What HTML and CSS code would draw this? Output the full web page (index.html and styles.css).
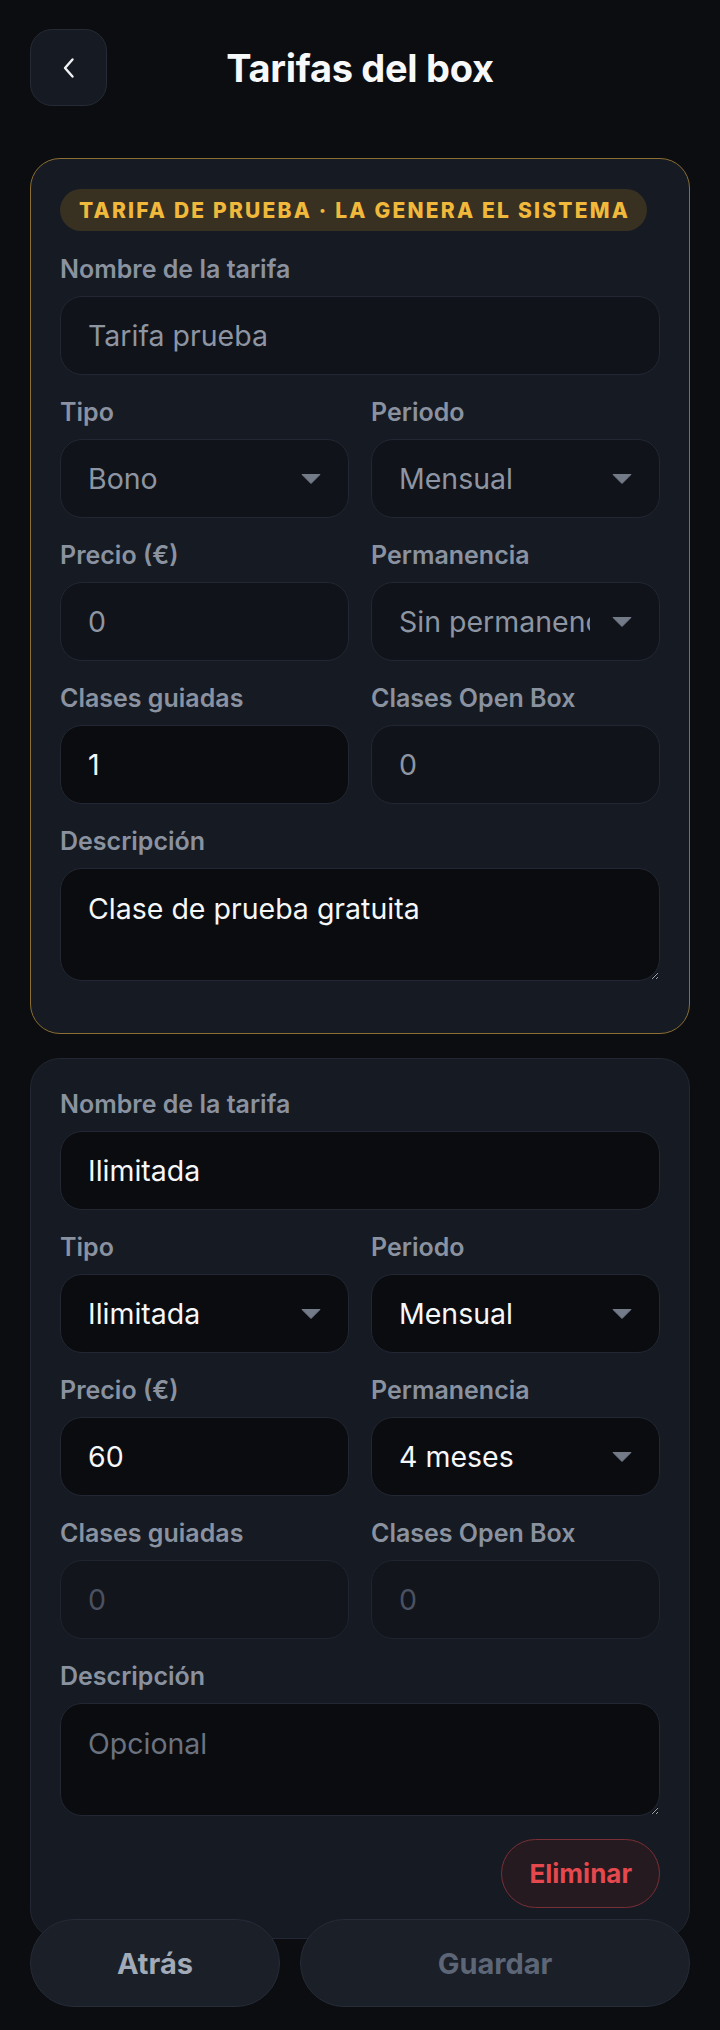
FILE: index.html
```html
<!DOCTYPE html>
<html lang="es">
<head>
<meta charset="utf-8">
<title>Tarifas del box</title>
<link rel="stylesheet" href="styles.css">
</head>
<body>
<div class="page">
  <header class="header">
    <button class="back-btn" aria-label="Volver">
      <svg width="14" height="24" viewBox="0 0 14 24"><path d="M10.5 3.5 L3 12 L10.5 20.5" fill="none" stroke="#f2f3f5" stroke-width="2.4" stroke-linecap="round" stroke-linejoin="round"/></svg>
    </button>
    <h1 class="title">Tarifas del box</h1>
    <span class="header-spacer"></span>
  </header>

  <section class="card card--trial">
    <div class="badge">TARIFA DE PRUEBA · LA GENERA EL SISTEMA</div>
    <div class="field">
      <label class="label">Nombre de la tarifa</label>
      <div class="box box--muted">Tarifa prueba</div>
    </div>
    <div class="grid">
      <div class="field">
        <label class="label">Tipo</label>
        <div class="box box--muted select"><span class="select-value">Bono</span><svg class="arrow" width="20" height="10" viewBox="0 0 20 10"><path d="M1 0.5 H19 L10 9.5 Z" fill="currentColor" stroke="currentColor" stroke-width="1" stroke-linejoin="round"/></svg></div>
      </div>
      <div class="field">
        <label class="label">Periodo</label>
        <div class="box box--muted select"><span class="select-value">Mensual</span><svg class="arrow" width="20" height="10" viewBox="0 0 20 10"><path d="M1 0.5 H19 L10 9.5 Z" fill="currentColor" stroke="currentColor" stroke-width="1" stroke-linejoin="round"/></svg></div>
      </div>
      <div class="field">
        <label class="label">Precio (€)</label>
        <div class="box box--muted">0</div>
      </div>
      <div class="field">
        <label class="label">Permanencia</label>
        <div class="box box--muted select"><span class="select-value">Sin permanencia</span><svg class="arrow" width="20" height="10" viewBox="0 0 20 10"><path d="M1 0.5 H19 L10 9.5 Z" fill="currentColor" stroke="currentColor" stroke-width="1" stroke-linejoin="round"/></svg></div>
      </div>
      <div class="field">
        <label class="label">Clases guiadas</label>
        <div class="box box--filled">1</div>
      </div>
      <div class="field">
        <label class="label">Clases Open Box</label>
        <div class="box box--muted">0</div>
      </div>
    </div>
    <div class="field">
      <label class="label">Descripción</label>
      <textarea class="textarea textarea--filled">Clase de prueba gratuita</textarea>
    </div>
  </section>

  <section class="card">
    <div class="field">
      <label class="label">Nombre de la tarifa</label>
      <div class="box box--filled">Ilimitada</div>
    </div>
    <div class="grid">
      <div class="field">
        <label class="label">Tipo</label>
        <div class="box box--filled select"><span class="select-value">Ilimitada</span><svg class="arrow" width="20" height="10" viewBox="0 0 20 10"><path d="M1 0.5 H19 L10 9.5 Z" fill="currentColor" stroke="currentColor" stroke-width="1" stroke-linejoin="round"/></svg></div>
      </div>
      <div class="field">
        <label class="label">Periodo</label>
        <div class="box box--filled select"><span class="select-value">Mensual</span><svg class="arrow" width="20" height="10" viewBox="0 0 20 10"><path d="M1 0.5 H19 L10 9.5 Z" fill="currentColor" stroke="currentColor" stroke-width="1" stroke-linejoin="round"/></svg></div>
      </div>
      <div class="field">
        <label class="label">Precio (€)</label>
        <div class="box box--filled">60</div>
      </div>
      <div class="field">
        <label class="label">Permanencia</label>
        <div class="box box--filled select"><span class="select-value">4 meses</span><svg class="arrow" width="20" height="10" viewBox="0 0 20 10"><path d="M1 0.5 H19 L10 9.5 Z" fill="currentColor" stroke="currentColor" stroke-width="1" stroke-linejoin="round"/></svg></div>
      </div>
      <div class="field">
        <label class="label">Clases guiadas</label>
        <div class="box box--disabled">0</div>
      </div>
      <div class="field">
        <label class="label">Clases Open Box</label>
        <div class="box box--disabled">0</div>
      </div>
    </div>
    <div class="field">
      <label class="label">Descripción</label>
      <textarea class="textarea textarea--filled" placeholder="Opcional"></textarea>
    </div>
    <div class="card-actions">
      <button class="btn-delete">Eliminar</button>
    </div>
  </section>
</div>

<footer class="footer">
  <button class="footer-btn footer-btn--back">Atrás</button>
  <button class="footer-btn footer-btn--save">Guardar</button>
</footer>
</body>
</html>
```

FILE: styles.css
```css
* {
  box-sizing: border-box;
}

html, body {
  margin: 0;
  padding: 0;
  background: #0b0d11;
}

body {
  font-family: "Inter", "Liberation Sans", sans-serif;
  color: #f4f5f7;
}

.page {
  padding: 29px 30px 0;
}

.header {
  display: grid;
  grid-template-columns: 77px 1fr 77px;
  align-items: center;
  margin-bottom: 52px;
}

.back-btn {
  width: 77px;
  height: 77px;
  border-radius: 22px;
  background: #161a22;
  border: 1.5px solid #252a35;
  display: flex;
  align-items: center;
  justify-content: center;
  padding: 0;
}

.title {
  margin: 0;
  text-align: center;
  font-size: 38px;
  font-weight: 700;
  letter-spacing: -0.3px;
  color: #f7f8fa;
}

.card {
  background: #161a22;
  border: 1.5px solid #222733;
  border-radius: 30px;
  padding: 30px 29px 30px;
  display: flex;
  flex-direction: column;
  gap: 22px;
  margin-bottom: 24px;
}

.card--trial {
  border-color: #8b6e33;
  padding-bottom: 52px;
}

.badge {
  align-self: flex-start;
  height: 42px;
  border-radius: 21px;
  background: #383122;
  color: #f1b93b;
  font-size: 21px;
  font-weight: 800;
  letter-spacing: 2.2px;
  display: flex;
  align-items: center;
  padding: 0 17px 0 19px;
  white-space: nowrap;
  margin-bottom: 1px;
}

.field {
  display: flex;
  flex-direction: column;
  gap: 12px;
  min-width: 0;
}

.label {
  font-size: 25px;
  line-height: 30px;
  font-weight: 600;
  color: #8a92a0;
  letter-spacing: 0;
}

.grid {
  display: grid;
  grid-template-columns: 1fr 1fr;
  column-gap: 22px;
  row-gap: 22px;
}

.box {
  height: 79px;
  border-radius: 22px;
  border: 1.5px solid #222733;
  padding: 0 27px;
  display: flex;
  align-items: center;
  font-size: 28.5px;
  font-weight: 400;
  min-width: 0;
}

.box--muted {
  background: #10131a;
  color: #8e95a2;
}

.box--filled {
  background: #0a0c10;
  color: #f6f7f9;
}

.box--disabled {
  background: #12151c;
  color: #4a5160;
  border-color: #1f242e;
}

.select {
  gap: 22px;
}

.select-value {
  flex: 1;
  min-width: 0;
  overflow: hidden;
  white-space: nowrap;
}

.arrow {
  flex: none;
  color: #737a88;
}

.textarea {
  display: block;
  width: 100%;
  height: 113px;
  border-radius: 22px;
  border: 1.5px solid #222733;
  padding: 23px 27px 19px;
  font-family: "Inter", "Liberation Sans", sans-serif;
  font-size: 28.5px;
  line-height: 1.2;
  resize: vertical;
  outline: none;
}

.textarea--filled {
  background: #0a0c10;
  color: #f6f7f9;
}

.textarea::placeholder {
  color: #6b7280;
}

.card-actions {
  display: flex;
  justify-content: flex-end;
  margin-top: 1px;
}

.btn-delete {
  height: 69px;
  padding: 0 27px;
  border-radius: 35px;
  border: 1.5px solid #7a2f36;
  background: #241a20;
  color: #e5484d;
  font-family: "Inter", "Liberation Sans", sans-serif;
  font-size: 26px;
  font-weight: 700;
}

.footer {
  position: fixed;
  left: 30px;
  right: 30px;
  bottom: 23px;
  display: flex;
  gap: 20px;
}

.footer-btn {
  height: 88px;
  border-radius: 44px;
  border: 1.5px solid #262c38;
  background: #1a1f28;
  font-family: "Inter", "Liberation Sans", sans-serif;
  font-size: 29px;
  font-weight: 700;
}

.footer-btn--back {
  width: 250px;
  flex: none;
  color: #a2aab7;
}

.footer-btn--save {
  flex: 1;
  color: #5d6676;
}
```
